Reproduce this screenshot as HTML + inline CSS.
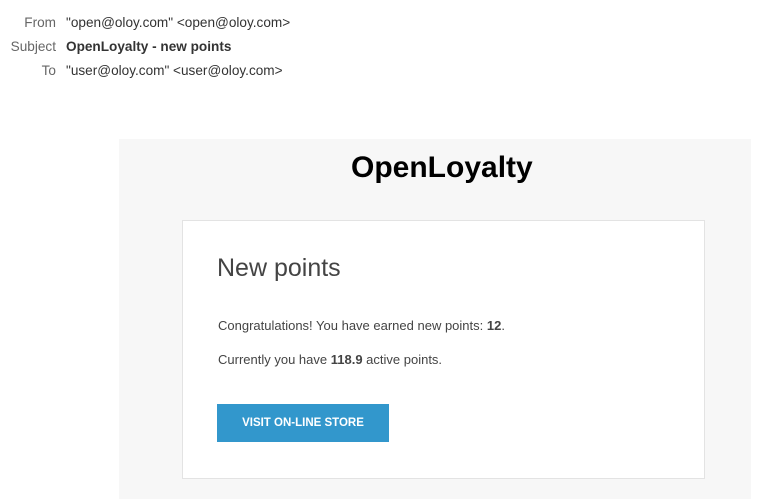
<!DOCTYPE html>
<html><head><style>
body{margin:0;width:770px;height:499px;background:#fff;font-family:"Liberation Sans",Arial,sans-serif;position:relative;overflow:hidden;color:#333}
.h{position:absolute;font-size:13.6px;line-height:16px}
.l{right:714px;text-align:right;color:#666}
.v{left:66px;color:#333}
.gray{position:absolute;left:119px;top:139px;width:632px;height:360px;background:#f7f7f7}
.title{position:absolute;left:351px;top:151px;font-size:30px;font-weight:bold;color:#000}
.card{position:absolute;left:182px;top:220px;width:521px;height:257px;background:#fff;border:1px solid #e3e3e3}
.np{position:absolute;left:217px;top:254px;font-size:25px;color:#444}
.p{position:absolute;left:218px;font-size:13px;color:#444}
.btn{position:absolute;left:217px;top:404px;width:172px;height:38px;background:#3297cc;color:#fff;font-weight:bold;font-size:11.5px;text-align:center;line-height:38px}
</style></head><body>
<div class="h l" style="top:15px">From</div><div class="h v" style="top:15px">"open@oloy.com" &lt;open@oloy.com&gt;</div>
<div class="h l" style="top:39px">Subject</div><div class="h v" style="top:39px;font-weight:bold">OpenLoyalty - new points</div>
<div class="h l" style="top:63px">To</div><div class="h v" style="top:63px">"user@oloy.com" &lt;user@oloy.com&gt;</div>
<div class="gray"></div>
<div class="title">OpenLoyalty</div>
<div class="card"></div>
<div class="np">New points</div>
<div class="p" style="top:318px">Congratulations! You have earned new points: <b>12</b>.</div>
<div class="p" style="top:352px">Currently you have <b>118.9</b> active points.</div>
<div class="btn">VISIT ON-LINE STORE</div>
</body></html>
